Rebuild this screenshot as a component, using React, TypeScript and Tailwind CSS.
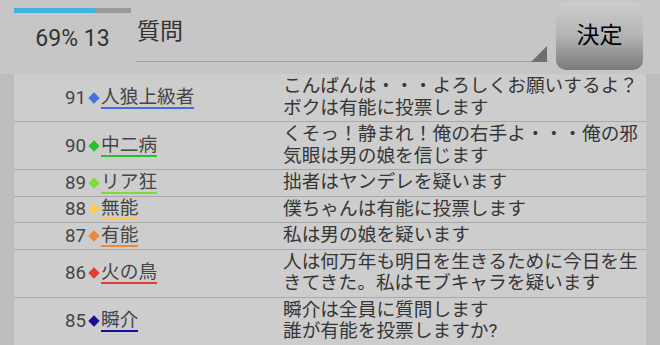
import React from "react";

type Row = {
  no: number;
  color: string;
  name: string;
  lines: string[];
};

const rows: Row[] = [
  {
    no: 91,
    color: "bg-[#3f70e4]",
    name: "人狼上級者",
    lines: ["こんばんは・・・よろしくお願いするよ？", "ボクは有能に投票します"],
  },
  {
    no: 90,
    color: "bg-[#26c12e]",
    name: "中二病",
    lines: ["くそっ！静まれ！俺の右手よ・・・俺の邪", "気眼は男の娘を信じます"],
  },
  { no: 89, color: "bg-[#7ddc3c]", name: "リア狂", lines: ["拙者はヤンデレを疑います"] },
  { no: 88, color: "bg-[#ffc94c]", name: "無能", lines: ["僕ちゃんは有能に投票します"] },
  { no: 87, color: "bg-[#f08838]", name: "有能", lines: ["私は男の娘を疑います"] },
  {
    no: 86,
    color: "bg-[#e63c3c]",
    name: "火の鳥",
    lines: ["人は何万年も明日を生きるために今日を生", "きてきた。私はモブキャラを疑います"],
  },
  {
    no: 85,
    color: "bg-[#1a0c9c]",
    name: "瞬介",
    lines: ["瞬介は全員に質問します", "誰が有能を投票しますか?"],
  },
];

const VoteRow = ({ row }: { row: Row }) => {
  return (
    <div className="flex border-b border-[#a9a9a9]">
      <div className="w-[269px] shrink-0 pl-[51px] flex items-center text-[#454545]">
        <span className="leading-[20px]">{row.no}</span>
        <span className="w-[15px] flex justify-center items-center">
          <span className={`w-[8px] h-[8px] rotate-45 ${row.color}`} />
        </span>
        <span className="relative leading-[20px] pb-[2px]">
          {row.name}
          <span className={`absolute left-0 right-0 bottom-0 h-[2px] ${row.color}`} />
        </span>
      </div>
      <div className="flex-1 py-[2px] leading-[21.5px] text-[#363636]">
        {row.lines.map((l, i) => (
          <div key={i} className="whitespace-nowrap">
            {l}
          </div>
        ))}
      </div>
    </div>
  );
};

export default function App() {
  return (
    <div className="w-[660px] h-[345px] overflow-hidden bg-[#c6c6c6] font-['Roboto','Noto_Sans_CJK_JP',sans-serif] text-[18.7px]">
      {/* header */}
      <div className="h-[74px] flex">
        <div className="w-[117px] ml-[14px] shrink-0 flex flex-col">
          <div className="mt-[8px] h-[4.5px] bg-[#9b9b9b] flex">
            <div className="w-[69%] bg-[#3eb2e2]" />
          </div>
          <div className="mt-[14px] text-center text-[23px] leading-[24px] text-[#333]">69% 13</div>
        </div>
        <div className="w-[412px] ml-[5px] relative">
          <div className="pt-[16px] pl-[1px] text-[23px] leading-[32px] text-[#333]">質問</div>
          <div className="absolute left-0 right-0 top-[60.5px] h-[1.5px] bg-[#a0a0a0]" />
          <svg className="absolute right-[1px] top-[46px]" width="16" height="16" viewBox="0 0 16 16">
            <polygon points="0,16 16,16 16,0" fill="#6f6f6f" />
          </svg>
        </div>
        <button className="ml-[8px] mt-[2px] w-[87px] h-[68px] rounded-[10px] bg-linear-to-b from-[#cdcdcd] via-[#b4b4b4] to-[#7a7a7a] text-[23px] text-black flex items-center justify-center">
          決定
        </button>
      </div>
      {/* list */}
      <div className="flex h-[271px]">
        <div className="w-[14px] bg-[#bdbdbd]" />
        <div className="flex-1 bg-[#cdcdcd]">
          {rows.map((r) => (
            <VoteRow key={r.no} row={r} />
          ))}
        </div>
        <div className="w-[14px] bg-[#bdbdbd]" />
      </div>
    </div>
  );
}
